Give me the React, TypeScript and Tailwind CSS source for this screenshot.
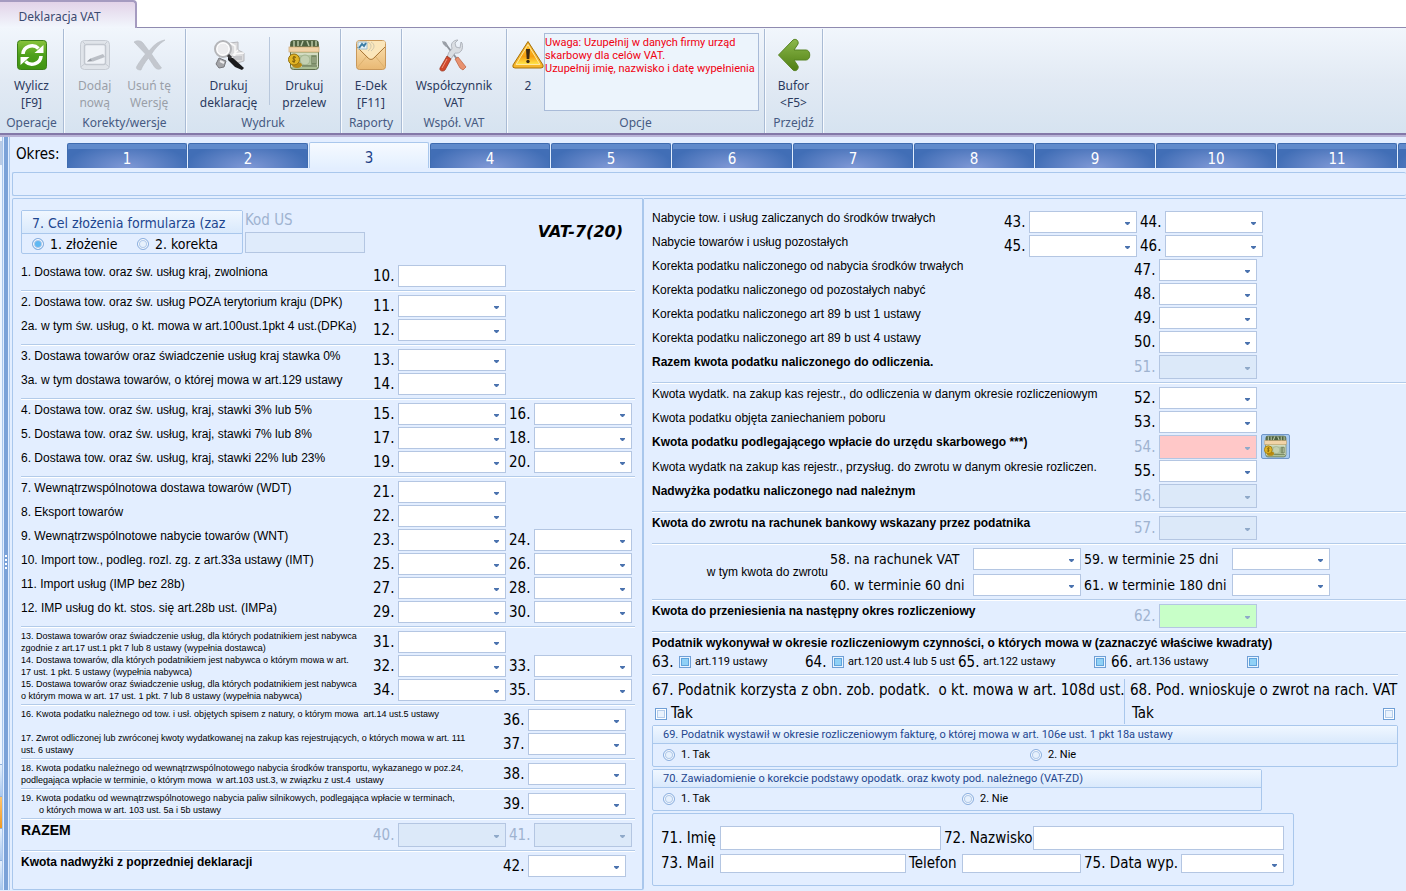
import { useId, useState, type ReactNode } from "react";
import clsx from "clsx";

const tahoma = "font-['DejaVu_Sans_Condensed','Noto_Sans',sans-serif]";
const tahomaSmall = "font-['Roboto','Noto_Sans',sans-serif]";
const arial = "font-['Liberation_Sans',sans-serif]";

/* ---------- icons ---------- */

function RefreshIcon() {
  return (
    <svg width="32" height="32" viewBox="0 0 32 32" aria-hidden="true">
      <defs>
        <linearGradient id="green" x1="0" y1="0" x2="0" y2="1">
          <stop offset="0" stopColor="#8ac43c" />
          <stop offset="0.5" stopColor="#4ea01c" />
          <stop offset="1" stopColor="#3f9410" />
        </linearGradient>
      </defs>
      <rect x="1.5" y="1.5" width="29" height="29" rx="3" fill="url(#green)" stroke="#3b7f18" />
      <path d="M7 15a9 8.5 0 0 1 15.5-5.5" fill="none" stroke="#fff" strokeWidth="3.6" />
      <path d="M25 17a9 8.5 0 0 1-15.5 5.5" fill="none" stroke="#fff" strokeWidth="3.6" />
      <path d="M18.5 14h9V6z" fill="#fff" />
      <path d="M13.5 18h-9v8z" fill="#fff" />
    </svg>
  );
}

function AddVersionIcon() {
  return (
    <svg width="32" height="32" viewBox="0 0 32 32" aria-hidden="true">
      <rect x="1.5" y="1.5" width="29" height="29" rx="4" fill="#e0e4ea" stroke="#c6cbd3" />
      <rect x="5.5" y="5.5" width="21" height="20" rx="2" fill="#eff2f7" stroke="#c2c7cf" strokeWidth="1.5" />
      <path d="M8 22.5l3.5-3 12.5-4.5 2 3-12 4.5z" fill="#bbbfc6" />
      <path d="M8 22.5l3.5-3 1.5 2.5z" fill="#989da5" />
      <path d="M1.5 28l4-3M30.5 28l-4-3M4 3l3 3M28 3l-3 3" stroke="#c6cbd3" />
    </svg>
  );
}

function DeleteVersionIcon() {
  return (
    <svg width="34" height="32" viewBox="0 0 34 32" aria-hidden="true">
      <path
        d="M2 3c3-2 7-1.5 9 1l6 8C21 7 26 2 33 1c-6 4-10 8.5-13.5 14 4 6 7 10 10 14-2 2-5 1.5-7-1l-6-9c-4 5-6 8-7.5 12-3 0-5-1-4.5-3 2-4 5-8 9-13z"
        fill="#c3c7ce"
        stroke="#b9bdc5"
        strokeWidth="0.6"
      />
    </svg>
  );
}

function PrintDeclarationIcon() {
  return (
    <svg width="32" height="32" viewBox="0 0 32 32" aria-hidden="true">
      <path d="M17 4l8-1v8l6 3v8l-10 3-6-7z" fill="#dcdcde" stroke="#b6b7bb" />
      <path d="M17 4l5 3v9l-4 4M25 11l-4 4 10-1M21 15v9" fill="none" stroke="#fafafa" strokeWidth="1.5" />
      <path d="M19 17h10v4h-7z" fill="#c4c5c9" />
      <path d="M15 18l5 1 11 10-2 2-7-3-7-7z" fill="#1b1b1d" />
      <path d="M6 19l7 3-2 6-5 1-3-4z" fill="#a3a4a8" stroke="#77787c" />
      <path d="M7 22l4 2" stroke="#ececee" strokeWidth="2" />
      <circle cx="10" cy="10" r="8" fill="#f8f8f9" stroke="#b4b5b8" strokeWidth="2" />
      <circle cx="10" cy="10" r="6" fill="#ececee" stroke="#fff" />
      <path d="M15 16l3 3" stroke="#3a3a3c" strokeWidth="3" />
    </svg>
  );
}

function MoneyIcon({ size = 32 }: { size?: number }) {
  return (
    <svg width={size} height={size} viewBox="0 0 32 32" aria-hidden="true">
      <rect x="2.5" y="1.5" width="28" height="29" rx="3" fill="#a9bd93" stroke="#5f6f4e" />
      <rect x="3" y="2" width="27" height="6" fill="#4e6140" />
      <path d="M6 2v6M10 2v5M15 2l-2 5M19 2l2 5M24 2v6M28 2v5" stroke="#b9c6a5" strokeWidth="1.5" />
      <rect x="3" y="14" width="27" height="14" fill="#d3dcc2" />
      <rect x="6" y="16" width="18" height="11" fill="#b2c39f" />
      <circle cx="17" cy="21" r="5" fill="#c3d0b1" stroke="#a3b48f" />
      <path d="M24 17h4v8h-4zM26 17v8M14 27h15" fill="none" stroke="#6d7f59" strokeWidth="1.3" />
      <rect x="1" y="8" width="30" height="5" fill="#f1d3a7" stroke="#cfa770" strokeWidth="0.7" />
      <ellipse cx="9" cy="26" rx="5" ry="3" fill="#b88a12" />
      <circle cx="6" cy="20.5" r="5.5" fill="#e2b526" stroke="#94700d" />
      <path d="M8 18.5c-3-2-4 1-2 2s1 3-2 1.5M6 17v7" fill="none" stroke="#7a5a08" />
    </svg>
  );
}

function MailIcon() {
  return (
    <svg width="32" height="32" viewBox="0 0 32 32" aria-hidden="true">
      <defs>
        <linearGradient id="paper" x1="0" y1="0" x2="0" y2="1">
          <stop offset="0" stopColor="#fbe3b4" />
          <stop offset="1" stopColor="#e9b873" />
        </linearGradient>
      </defs>
      <rect x="1.5" y="1.5" width="29" height="29" rx="3" fill="url(#paper)" stroke="#c9985a" />
      <path d="M2 29l10-12M30 29L20 17" stroke="#dcb06e" />
      <path d="M2 7l11 11c2 2 4 2 6 0L30 7V3q0-1-2-1H4Q2 2 2 4z" fill="#fbe6bb" />
      <path d="M2 8l11 11c2 2 4 2 6 0L30 8" fill="none" stroke="#a9793c" />
      <path d="M3 3h9v7H3z" fill="#e9f3f8" stroke="#a4bfcc" />
      <path d="M4 9l3-4 2 2 2-3" fill="none" stroke="#3c7da4" strokeWidth="2" />
      <path d="M13 3c4 2 4 6 0 9M16 3c4 2 4 6 0 9" fill="none" stroke="#cfc7ac" />
    </svg>
  );
}

function ToolsIcon() {
  return (
    <svg width="32" height="34" viewBox="0 0 32 34" aria-hidden="true">
      <path d="M6 4l13 17" stroke="#8d939b" strokeWidth="2" />
      <path d="M4 3l4 1 2 4-2 1-3-3z" fill="#9aa0a8" />
      <path d="M17 21l3-2 8 10-3 3-3-2z" fill="#e89270" stroke="#b95c3c" strokeWidth="0.7" />
      <path
        d="M20 2c-5 0-8 4-6 8 0 2-2 3-3 4l-2 5 4 2 4-6c5 1 9-3 7-10l-1-1-1 6-4-1-1-4z"
        fill="#d9dde2"
        stroke="#a5aab2"
        strokeWidth="0.8"
      />
      <path d="M9 18l4 3-6 11c-2 2-6 1-5-2z" fill="#d0482b" stroke="#963019" strokeWidth="0.7" />
      <path d="M9 21l-5 9" stroke="#ef9a82" />
    </svg>
  );
}

function WarningIcon() {
  return (
    <svg width="32" height="30" viewBox="0 0 32 30" aria-hidden="true">
      <defs>
        <linearGradient id="amber" x1="0" y1="0" x2="0" y2="1">
          <stop offset="0" stopColor="#ffc02c" />
          <stop offset="0.6" stopColor="#f6a010" />
          <stop offset="1" stopColor="#ffe84c" />
        </linearGradient>
      </defs>
      <path d="M16 1.5L31 25q1 3-2 3H3q-3 0-2-3z" fill="#f6b52a" stroke="#a8720c" />
      <path d="M16 4.5l12 20H4z" fill="url(#amber)" stroke="#ffe9a0" />
      <path d="M14 9h4l-.7 10h-2.6z" fill="#3d2a14" />
      <circle cx="16" cy="21.5" r="1.7" fill="#3d2a14" />
    </svg>
  );
}

function BackIcon() {
  return (
    <svg width="34" height="34" viewBox="0 0 34 34" aria-hidden="true">
      <defs>
        <linearGradient id="leaf" x1="0" y1="0" x2="0" y2="1">
          <stop offset="0" stopColor="#8cb84c" />
          <stop offset="1" stopColor="#4f7e12" />
        </linearGradient>
      </defs>
      <path
        d="M1.5 17L16 2c3-2 6 1 5 4l-4 6h12c5 0 5 10 0 10H17l4 6c1 3-2 6-5 4z"
        fill="url(#leaf)"
        stroke="#578322"
      />
    </svg>
  );
}

/* ---------- ribbon ---------- */

type RibbonButtonProps = {
  icon: ReactNode;
  lines: [string, string?];
  disabled?: boolean;
};

function RibbonButton({ icon, lines, disabled }: RibbonButtonProps) {
  return (
    <button
      type="button"
      disabled={disabled}
      className={clsx(
        "flex flex-col items-center text-xs leading-[17px]",
        disabled ? "text-[#9a9fa8]" : "text-[#2b3a5e]"
      )}
    >
      <span className="flex h-9 items-center justify-center">{icon}</span>
      <span className="mt-1">{lines[0]}</span>
      <span>{lines[1]}</span>
    </button>
  );
}

function RibbonGroup({ title, width, children }: { title: string; width: string; children: ReactNode }) {
  return (
    <div
      className={clsx(
        "flex shrink-0 flex-col border-r border-[#a9bbd4] shadow-[1px_0_0_#f8fbff]",
        width
      )}
    >
      <div className="flex h-[86px] justify-center pt-2">{children}</div>
      <div className="text-center text-xs leading-4 text-[#465a82]">{title}</div>
    </div>
  );
}

function Ribbon() {
  return (
    <header className="font-['Noto_Sans',sans-serif]">
      <div className="flex h-7 items-end border-b border-[#8f8bb0] bg-white">
        <button
          type="button"
          className="-mb-px h-7 w-[137px] rounded-tr border-t-2 border-r-2 border-[#a59bc0] bg-linear-to-b from-[#e2d3e8] to-[#f2f7fd] pt-1 pr-4 text-center text-xs text-[#3b4a70]"
        >
          Deklaracja VAT
        </button>
      </div>
      <div className="flex h-[105px] bg-linear-to-b from-[#f1f6fc] via-[#e2eaf4] to-[#d6e3f0] pt-px">
        <RibbonGroup title="Operacje" width="w-16">
          <RibbonButton icon={<RefreshIcon />} lines={["Wylicz", "[F9]"]} />
        </RibbonGroup>
        <RibbonGroup title="Korekty/wersje" width="w-[122px]">
          <div className="flex gap-4">
            <RibbonButton icon={<AddVersionIcon />} lines={["Dodaj", "nową"]} disabled />
            <RibbonButton icon={<DeleteVersionIcon />} lines={["Usuń tę", "Wersję"]} disabled />
          </div>
        </RibbonGroup>
        <RibbonGroup title="Wydruk" width="w-[155px]">
          <RibbonButton icon={<PrintDeclarationIcon />} lines={["Drukuj", "deklarację"]} />
          <div className="mx-3 h-[68px] w-px bg-[#b9c8dc]" />
          <RibbonButton icon={<MoneyIcon />} lines={["Drukuj", "przelew"]} />
        </RibbonGroup>
        <RibbonGroup title="Raporty" width="w-[61px]">
          <RibbonButton icon={<MailIcon />} lines={["E-Dek", "[F11]"]} />
        </RibbonGroup>
        <RibbonGroup title="Współ. VAT" width="w-[105px]">
          <RibbonButton icon={<ToolsIcon />} lines={["Współczynnik", "VAT"]} />
        </RibbonGroup>
        <RibbonGroup title="Opcje" width="w-[258px]">
          <RibbonButton icon={<WarningIcon />} lines={["2"]} />
          <div
            className={clsx(
              "-mt-1 h-[78px] w-[215px] border border-[#a9bbd8] bg-[#ecf4fc] pt-0.5 text-[11px] leading-[13px] whitespace-nowrap text-[#f00010]",
              tahomaSmall
            )}
          >
            Uwaga: Uzupełnij w danych firmy urząd
            <br />
            skarbowy dla celów VAT.
            <br />
            Uzupełnij imię, nazwisko i datę wypełnienia
          </div>
        </RibbonGroup>
        <RibbonGroup title="Przejdź" width="w-[58px]">
          <RibbonButton icon={<BackIcon />} lines={["Bufor", "<F5>"]} />
        </RibbonGroup>
      </div>
      <div className="h-1 border-t-2 border-[#8378a8] bg-[#b9b3d6]" />
    </header>
  );
}

/* ---------- form controls ---------- */

type Tone = "plain" | "off" | "red" | "green";

const toneClass: Record<Tone, string> = {
  plain: "bg-white",
  off: "bg-[#dce9f9]",
  red: "bg-[#ffc8c8]",
  green: "bg-[#c8ffc8]",
};

function Combo({ id, width, tone = "plain", short }: { id: string; width: string; tone?: Tone; short?: boolean }) {
  const height = short ? "h-[19px]" : tone === "plain" ? "h-[22px]" : "h-6";
  return (
    <div className={clsx("relative shrink-0", width, height)}>
      <select
        id={id}
        disabled={tone !== "plain"}
        className={clsx(
          "block h-full w-full appearance-none border border-[#b4c6e2] px-1 text-sm outline-none",
          toneClass[tone]
        )}
      />
      <svg
        className={clsx(
          "pointer-events-none absolute top-1/2 right-[7px]",
          tone === "plain" ? "text-[#4a72ae]" : "text-[#8fa9c9]"
        )}
        width="5"
        height="3"
        viewBox="0 0 5 3"
        aria-hidden="true"
      >
        <path d="M0 0h5v1L3 3H2L0 1z" fill="currentColor" />
      </svg>
    </div>
  );
}

type FieldProps = { no: number; wide?: boolean; tone?: Tone; input?: boolean };

function Field({ no, wide, tone = "plain", input }: FieldProps) {
  const id = `poz-${no}`;
  const width = wide ? "w-[108px]" : "w-[98px]";
  return (
    <div className="flex shrink-0 items-center">
      <label
        htmlFor={id}
        className={clsx("w-[25px] text-[15px] leading-6", tahoma, tone === "plain" ? "text-black" : "text-[#9fb3d0]")}
      >
        {no}.
      </label>
      {input ? (
        <input id={id} type="text" className={clsx("h-[22px] border border-[#b4c6e2] bg-white px-1 text-sm", width)} />
      ) : (
        <Combo id={id} width={width} tone={tone} />
      )}
    </div>
  );
}

const boxLook =
  "m-0 size-3 shrink-0 appearance-none border border-[#6f9fd6] bg-[#e9f2fd] shadow-[inset_0_0_0_1px_#fff,inset_0_0_0_2px_#b5cdeb] indeterminate:bg-[#8fd0f6] indeterminate:shadow-[inset_0_0_0_1px_#e9f4ff,inset_0_0_0_2px_#5fa3dc]";

function CheckBox({ id, mixed }: { id: string; mixed?: boolean }) {
  return (
    <input
      id={id}
      type="checkbox"
      className={boxLook}
      ref={(el) => {
        if (el) el.indeterminate = Boolean(mixed);
      }}
    />
  );
}

function Radio({ name, label, checked, onPick }: { name: string; label: string; checked?: boolean; onPick?: () => void }) {
  const id = useId();
  return (
    <div className="flex items-center gap-1.5 whitespace-nowrap">
      <input
        id={id}
        type="radio"
        name={name}
        checked={Boolean(checked)}
        onChange={onPick}
        className="m-0 size-3 shrink-0 appearance-none rounded-full border border-[#8aaede] bg-[#e6f0fc] shadow-[inset_0_0_0_1px_#fff,inset_0_0_0_2px_#b0c9ea] checked:bg-[#5fb8f2]"
      />
      <label htmlFor={id}>{label}</label>
    </div>
  );
}

function RadioGroup({
  title,
  name,
  options,
  large,
  className,
  gap,
}: {
  title: string;
  name: string;
  options: string[];
  large?: boolean;
  className: string;
  gap: string;
}) {
  const [picked, setPicked] = useState(large ? 0 : -1);
  return (
    <fieldset
      className={clsx(
        "min-w-0 shrink-0 rounded-xs border border-[#a9c7ec]",
        large ? tahoma : tahomaSmall,
        large ? "text-sm" : "text-[11px]",
        className
      )}
    >
      <div
        className={clsx(
          "border-b border-[#a9c7ec] bg-linear-to-b from-[#f0f7ff] to-[#d9e9fc] pl-2.5 whitespace-nowrap text-[#1e468f]",
          large ? "h-[23px] leading-6" : "h-[18px] leading-[18px]"
        )}
      >
        {title}
      </div>
      <div className={clsx("grid items-center pl-2.5", gap, large ? "h-[19px]" : "h-[22px]")}>
        {options.map((label, index) => (
          <Radio
            key={label}
            name={name}
            label={label}
            checked={picked === index}
            onPick={() => setPicked(index)}
          />
        ))}
      </div>
    </fieldset>
  );
}

/* ---------- rows ---------- */

type RowData = {
  text: ReactNode;
  fields: FieldProps[];
  small?: boolean;
  bold?: boolean;
  large?: boolean;
};

function Section({ children, flush }: { children: ReactNode; flush?: boolean }) {
  return (
    <section className={clsx("pt-0.5 pb-0.5", !flush && "mb-px border-b border-[#b3cbe9] shadow-[0_1px_0_#ffffff]")}>
      {children}
    </section>
  );
}

function LeftRow({ text, fields, small, bold, large }: RowData) {
  const late = fields[0].no >= 36 && !fields[0].wide;
  return (
    <div
      className={clsx(
        "flex justify-between",
        late && "pr-[9px]",
        !late && (fields.length === 1 ? "pr-[129px]" : "pr-[3px]"),
        fields[0].tone === "off" ? "h-[26px]" : "h-6"
      )}
    >
      <div
        className={clsx(
          "min-w-0 whitespace-nowrap",
          arial,
          small ? "text-[9px] leading-3" : "leading-4",
          !small && (large ? "text-sm" : "text-xs"),
          bold && "font-bold"
        )}
      >
        {text}
      </div>
      <div className="flex items-center gap-[3px]">
        {fields.map((f) => (
          <Field key={f.no} {...f} />
        ))}
      </div>
    </div>
  );
}

const leftSections: RowData[][] = [
  [
    { text: "2. Dostawa tow. oraz św. usług POZA terytorium kraju (DPK)", fields: [{ no: 11, wide: true }] },
    { text: "2a. w tym św. usług, o kt. mowa w art.100ust.1pkt 4 ust.(DPKa)", fields: [{ no: 12, wide: true }] },
  ],
  [
    { text: "3. Dostawa towarów oraz świadczenie usług kraj stawka 0%", fields: [{ no: 13, wide: true }] },
    { text: "3a. w tym dostawa towarów, o której mowa w art.129 ustawy", fields: [{ no: 14, wide: true }] },
  ],
  [
    { text: "4. Dostawa tow. oraz św. usług, kraj, stawki 3% lub 5%", fields: [{ no: 15, wide: true }, { no: 16 }] },
    { text: "5. Dostawa tow. oraz św. usług, kraj, stawki 7% lub 8%", fields: [{ no: 17, wide: true }, { no: 18 }] },
    { text: "6. Dostawa tow. oraz św. usług, kraj, stawki 22% lub 23%", fields: [{ no: 19, wide: true }, { no: 20 }] },
  ],
  [
    { text: "7. Wewnątrzwspólnotowa dostawa towarów (WDT)", fields: [{ no: 21, wide: true }] },
    { text: "8. Eksport towarów", fields: [{ no: 22, wide: true }] },
    { text: "9. Wewnątrzwspólnotowe nabycie towarów (WNT)", fields: [{ no: 23, wide: true }, { no: 24 }] },
    { text: "10. Import tow., podleg. rozl. zg. z art.33a ustawy (IMT)", fields: [{ no: 25, wide: true }, { no: 26 }] },
    { text: "11. Import usług (IMP bez 28b)", fields: [{ no: 27, wide: true }, { no: 28 }] },
    { text: "12. IMP usług do kt. stos. się art.28b ust. (IMPa)", fields: [{ no: 29, wide: true }, { no: 30 }] },
  ],
  [
    {
      small: true,
      text: (
        <>
          13. Dostawa towarów oraz świadczenie usług, dla których podatnikiem jest nabywca
          <br />
          zgodnie z art.17 ust.1 pkt 7 lub 8 ustawy (wypełnia dostawca)
        </>
      ),
      fields: [{ no: 31, wide: true }],
    },
    {
      small: true,
      text: (
        <>
          14. Dostawa towarów, dla których podatnikiem jest nabywca o którym mowa w art.
          <br />
          17 ust. 1 pkt. 5 ustawy (wypełnia nabywca)
        </>
      ),
      fields: [{ no: 32, wide: true }, { no: 33 }],
    },
    {
      small: true,
      text: (
        <>
          15. Dostawa towarów oraz świadczenie usług, dla których podatnikiem jest nabywca
          <br />
          o którym mowa w art. 17 ust. 1 pkt. 7 lub 8 ustawy (wypełnia nabywca)
        </>
      ),
      fields: [{ no: 34, wide: true }, { no: 35 }],
    },
  ],
  [
    {
      small: true,
      text: <>16. Kwota podatku należnego od tow. i usł. objętych spisem z natury, o którym mowa&nbsp; art.14 ust.5 ustawy</>,
      fields: [{ no: 36 }],
    },
    {
      small: true,
      text: (
        <>
          17. Zwrot odliczonej lub zwróconej kwoty wydatkowanej na zakup kas rejestrujących, o których mowa w art. 111
          <br />
          ust. 6 ustawy
        </>
      ),
      fields: [{ no: 37 }],
    },
  ],
  [
    {
      small: true,
      text: (
        <>
          18. Kwota podatku należnego od wewnątrzwspólnotowego nabycia środków transportu, wykazanego w poz.24,
          <br />
          podlegająca wpłacie w terminie, o którym mowa&nbsp; w art.103 ust.3, w związku z ust.4&nbsp; ustawy
        </>
      ),
      fields: [{ no: 38 }],
    },
  ],
  [
    {
      small: true,
      text: (
        <>
          19. Kwota podatku od wewnątrzwspólnotowego nabycia paliw silnikowych, podlegająca wpłacie w terminach,
          <br />
          <span className="pl-[18px]">o których mowa w art. 103 ust. 5a i 5b ustawy</span>
        </>
      ),
      fields: [{ no: 39 }],
    },
  ],
  [{ text: "RAZEM", bold: true, large: true, fields: [{ no: 40, wide: true, tone: "off" }, { no: 41, tone: "off" }] }],
];

function LeftPanel() {
  return (
    <div className="min-w-0 grow basis-[632px] rounded-xs border border-r-2 border-[#a9c7ec] pt-[11px] pr-[7px] pb-2 pl-2">
      <div className="flex h-[52px]">
        <RadioGroup
          title="7. Cel złożenia formularza (zaz"
          name="cel"
          options={["1. złożenie", "2. korekta"]}
          large
          className="h-11 w-[222px]"
          gap="grid-cols-[105px_1fr]"
        />
        <div className={clsx("ml-0.5 flex flex-col text-[15px] leading-5 text-[#9fb3d0]", tahoma)}>
          <label htmlFor="kod-us">Kod US</label>
          <input id="kod-us" type="text" disabled className="mt-0.5 h-[21px] w-[120px] border border-[#b4c6e2] bg-[#dfebfb] px-1" />
        </div>
        <h1 className="mt-3 mr-3 ml-auto font-['DejaVu_Sans',sans-serif] text-base leading-5 font-bold whitespace-nowrap text-black italic">
          VAT-7(20)
        </h1>
      </div>
      <Section>
        <LeftRow text="1. Dostawa tow. oraz św. usług kraj, zwolniona" fields={[{ no: 10, wide: true, input: true }]} />
      </Section>
      {leftSections.map((rows) => (
        <Section key={rows[0].fields[0].no}>
          {rows.map((row) => (
            <LeftRow key={row.fields[0].no} {...row} />
          ))}
        </Section>
      ))}
      <Section flush>
        <LeftRow text="Kwota nadwyżki z poprzedniej deklaracji" bold fields={[{ no: 42 }]} />
      </Section>
    </div>
  );
}

const rowHeight: Record<Tone, string> = {
  plain: "h-6",
  off: "h-[26px]",
  red: "h-[25px]",
  green: "h-[26px]",
};

function RightRow({ text, fields, bold, extra }: RowData & { extra?: ReactNode }) {
  return (
    <div className={clsx("flex", rowHeight[fields[0].tone ?? "plain"])}>
      <div
        className={clsx(
          "shrink-0 text-xs leading-4 whitespace-nowrap",
          arial,
          bold && "font-bold",
          fields[0].wide ? "w-[352px]" : "w-[482px]"
        )}
      >
        {text}
      </div>
      <div className="flex items-center gap-[3px]">
        {fields.map((f) => (
          <Field key={f.no} {...f} />
        ))}
        {extra}
      </div>
    </div>
  );
}

function TermField({ no, text, wide }: { no: number; text: string; wide?: boolean }) {
  const id = `poz-${no}`;
  return (
    <>
      <label htmlFor={id} className={clsx("text-sm leading-6 whitespace-nowrap", tahoma)}>
        {no}. {text}
      </label>
      <Combo id={id} width={wide ? "w-[108px]" : "w-[98px]"} />
    </>
  );
}

function ArticleCheck({ no, text, after }: { no: number; text: string; after?: boolean }) {
  const id = `poz-${no}`;
  return (
    <div className="flex items-center whitespace-nowrap">
      <span className={clsx("shrink-0 text-[15px]", after ? "w-[25px]" : "w-[27px]")}>{no}.</span>
      {!after && <CheckBox id={id} mixed />}
      <label htmlFor={id} className={clsx("text-[11px]", tahomaSmall, after ? "w-[111px]" : "ml-1")}>
        {text}
      </label>
      {after && <CheckBox id={id} mixed />}
    </div>
  );
}

const textBox = "border border-[#b4c6e2] bg-white px-1 text-sm";

function RightPanel() {
  return (
    <div className="min-w-0 grow basis-[762px] border-t border-[#a9c7ec] pt-[9px] pb-1 pl-2">
      <Section>
        <RightRow text="Nabycie tow. i usług zaliczanych do środków trwałych" fields={[{ no: 43, wide: true }, { no: 44 }]} />
        <RightRow text="Nabycie towarów i usług pozostałych" fields={[{ no: 45, wide: true }, { no: 46 }]} />
        <RightRow text="Korekta podatku naliczonego od nabycia środków trwałych" fields={[{ no: 47 }]} />
        <RightRow text="Korekta podatku naliczonego od pozostałych nabyć" fields={[{ no: 48 }]} />
        <RightRow text="Korekta podatku naliczonego art 89 b ust 1 ustawy" fields={[{ no: 49 }]} />
        <RightRow text="Korekta podatku naliczonego art 89 b ust 4 ustawy" fields={[{ no: 50 }]} />
        <RightRow text="Razem kwota podatku naliczonego do odliczenia." bold fields={[{ no: 51, tone: "off" }]} />
      </Section>
      <Section>
        <RightRow
          text="Kwota wydatk. na zakup kas rejestr., do odliczenia w danym okresie rozliczeniowym"
          fields={[{ no: 52 }]}
        />
        <RightRow text="Kwota podatku objęta zaniechaniem poboru" fields={[{ no: 53 }]} />
        <RightRow
          text="Kwota podatku podlegającego wpłacie do urzędu skarbowego ***)"
          bold
          fields={[{ no: 54, tone: "red" }]}
          extra={
            <button
              type="button"
              aria-label="Drukuj przelew"
              className="ml-px flex h-[25px] w-[29px] items-center justify-center rounded-xs border border-[#6f96c8] bg-[#a9cbf2]"
            >
              <MoneyIcon size={23} />
            </button>
          }
        />
        <RightRow
          text="Kwota wydatk na zakup kas rejestr., przysług. do zwrotu w danym okresie rozliczen."
          fields={[{ no: 55 }]}
        />
        <RightRow text="Nadwyżka podatku naliczonego nad należnym" bold fields={[{ no: 56, tone: "off" }]} />
      </Section>
      <Section>
        <RightRow text="Kwota do zwrotu na rachunek bankowy wskazany przez podatnika" bold fields={[{ no: 57, tone: "off" }]} />
      </Section>
      <Section>
        <div className="flex items-center">
          <span className={clsx("w-[178px] pr-0.5 text-right text-xs whitespace-nowrap", arial)}>w tym kwota do zwrotu</span>
          <div className="grid grid-cols-[143px_111px_148px_98px] items-center gap-y-0.5">
            <TermField no={58} text="na rachunek VAT" wide />
            <TermField no={59} text="w terminie 25 dni" />
            <TermField no={60} text="w terminie 60 dni" wide />
            <TermField no={61} text="w terminie 180 dni" />
          </div>
        </div>
      </Section>
      <Section>
        <RightRow text="Kwota do przeniesienia na następny okres rozliczeniowy" bold fields={[{ no: 62, tone: "green" }]} />
      </Section>
      <div className="mr-2">
        <Section>
          <h2 className={clsx("text-xs leading-4 font-bold", arial)}>
            Podatnik wykonywał w okresie rozliczeniowym czynności, o których mowa w (zaznaczyć właściwe kwadraty)
          </h2>
          <div className={clsx("grid h-[21px] grid-cols-[153px_153px_153px_153px] items-center", tahoma)}>
            <ArticleCheck no={63} text="art.119 ustawy" />
            <ArticleCheck no={64} text="art.120 ust.4 lub 5 ust" />
            <ArticleCheck no={65} text="art.122 ustawy" after />
            <ArticleCheck no={66} text="art.136 ustawy" after />
          </div>
        </Section>
        <div className={clsx("flex h-12 pt-[3px] text-[15px] leading-[23px] whitespace-nowrap", tahoma)}>
          <div className="w-[473px] shrink-0 border-r border-[#a9c7ec]">
            <p>67. Podatnik korzysta z obn. zob. podatk.&nbsp; o kt. mowa w art. 108d ust.</p>
            <div className="flex items-center gap-1 pl-[3px]">
              <CheckBox id="poz-67" />
              <label htmlFor="poz-67">Tak</label>
            </div>
          </div>
          <div className="min-w-0 grow pl-[5px]">
            <p>68. Pod. wnioskuje o zwrot na rach. VAT</p>
            <div className="flex items-center justify-between pr-[3px] pl-0.5">
              <label htmlFor="poz-68">Tak</label>
              <CheckBox id="poz-68" />
            </div>
          </div>
        </div>
        <RadioGroup
          title="69. Podatnik wystawił w okresie rozliczeniowym fakturę, o której mowa w art. 106e ust. 1 pkt 18a ustawy"
          name="poz69"
          options={["1. Tak", "2. Nie"]}
          className="mt-px"
          gap="grid-cols-2"
        />
      </div>
      <RadioGroup
        title="70. Zawiadomienie o korekcie podstawy opodatk. oraz kwoty pod. należnego (VAT-ZD)"
        name="poz70"
        options={["1. Tak", "2. Nie"]}
        className="mt-0.5 w-[610px]"
        gap="grid-cols-2"
      />
      <div
        className={clsx(
          "mt-0.5 flex w-[642px] flex-col gap-1 rounded-xs border border-[#a9c7ec] pt-3 pr-[9px] pb-3 pl-2 text-[15px] leading-[19px] whitespace-nowrap",
          tahoma
        )}
      >
        <div className="flex items-center">
          <label htmlFor="imie" className="w-[59px] shrink-0">71. Imię</label>
          <input id="imie" type="text" className={clsx("h-6 w-[221px] shrink-0", textBox)} />
          <label htmlFor="nazwisko" className="ml-[3px] w-[89px] shrink-0">72. Nazwisko</label>
          <input id="nazwisko" type="text" className={clsx("h-6 min-w-0 grow", textBox)} />
        </div>
        <div className="flex items-center">
          <label htmlFor="mail" className="w-[59px] shrink-0">73. Mail</label>
          <input id="mail" type="text" className={clsx("h-[19px] w-[186px] shrink-0", textBox)} />
          <label htmlFor="telefon" className="ml-[3px] w-[53px] shrink-0">Telefon</label>
          <input id="telefon" type="text" className={clsx("h-[19px] w-0 min-w-0 grow", textBox)} />
          <label htmlFor="data" className="ml-[3px] w-[97px] shrink-0">75. Data wyp.</label>
          <Combo id="data" width="w-[103px]" short />
        </div>
      </div>
    </div>
  );
}

/* ---------- period tabs and side strip ---------- */

const periods = ["1", "2", "3", "4", "5", "6", "7", "8", "9", "10", "11"];

function PeriodTabs() {
  const [active, setActive] = useState("3");
  const tabLook = "w-[120px] shrink-0 rounded-t-xs border border-b-0 pt-1 text-[15px] leading-[22px]";
  const idleLook =
    "h-[25px] border-[#3f6cb0] bg-[radial-gradient(ellipse_at_bottom,#8099d6,#416eb6_75%)] text-white shadow-[inset_0_5px_0_#5f8acb]";
  return (
    <div className={clsx("flex pt-[5px]", tahoma)}>
      <span className="w-[55px] shrink-0 pl-1 text-[15px] leading-6 text-black">Okres:</span>
      <div role="tablist" className="flex h-[26px] min-w-0 grow items-end gap-px overflow-hidden">
        {periods.map((period) => (
          <button
            key={period}
            type="button"
            role="tab"
            aria-selected={period === active}
            onClick={() => setActive(period)}
            className={clsx(
              tabLook,
              period === active
                ? "h-[26px] border-[#a9c7ec] bg-linear-to-b from-[#f6faff] to-[#e3efff] text-[#1e3f86]"
                : idleLook
            )}
          >
            {period}
          </button>
        ))}
        <button type="button" role="tab" aria-label="Następny okres" className={clsx(tabLook, idleLook)} />
      </div>
    </div>
  );
}

function SideStrip() {
  return (
    <div className="flex shrink-0">
      <div className="flex w-[3px] flex-col justify-between border-r border-[#a9c7ec] bg-[#eef5ff]">
        <div className="mt-1 h-6 bg-[#b9cbe6]" />
        <div>
          <div className="h-8 border-t border-[#8fb0dc] bg-linear-to-b from-[#e4effc] to-[#a9c8ef]" />
          <div className="h-8 border-t border-[#8fb0dc] bg-linear-to-b from-[#ffc46a] to-[#f09a1e]" />
          <div className="h-8 border-t border-[#8fb0dc] bg-linear-to-b from-[#e4effc] to-[#a9c8ef]" />
          <div className="h-[30px] border-t border-[#8fb0dc] bg-linear-to-b from-[#e4effc] to-[#a9c8ef]" />
        </div>
      </div>
      <div className="ml-px flex w-1 flex-col items-center justify-center gap-0.5 bg-[#7ba2d8] pt-24">
        <span className="size-0.5 bg-white" />
        <span className="size-0.5 bg-white" />
        <span className="size-0.5 bg-white" />
        <span className="size-0.5 bg-white" />
      </div>
      <div className="ml-px w-px bg-[#a9c7ec]" />
    </div>
  );
}

export default function App() {
  return (
    <div className="min-h-screen overflow-x-hidden bg-[#e3eeff] text-black">
      <Ribbon />
      <main className="flex">
        <SideStrip />
        <div className="min-w-0 grow pl-0.5">
          <PeriodTabs />
          <div className="mt-1 h-6 rounded-xs border border-r-0 border-[#a9c7ec]" />
          <div className="mt-0.5 flex">
            <LeftPanel />
            <RightPanel />
          </div>
        </div>
      </main>
    </div>
  );
}
